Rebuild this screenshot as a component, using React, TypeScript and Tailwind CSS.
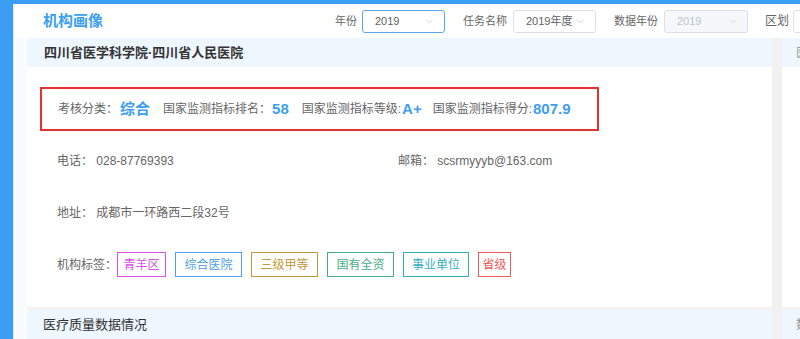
import { ChevronDown } from "lucide-react";

const FONT = { fontFamily: '"Liberation Sans", "Noto Sans CJK SC", sans-serif' };

const TAGS = [
  { t: "青羊区", c: "#d94fe6", w: 49 },
  { t: "综合医院", c: "#4f9fe3", w: 67 },
  { t: "三级甲等", c: "#c09a3c", w: 67 },
  { t: "国有全资", c: "#45ae7f", w: 67 },
  { t: "事业单位", c: "#35aebf", w: 66 },
  { t: "省级", c: "#ef5a5a", w: 33 },
];

function Select({ value, focus, disabled, w = 83 }: { value: string; focus?: boolean; disabled?: boolean; w?: number }) {
  const border = focus ? "border-[#5aa6f0]" : "border-[#dcdfe6]";
  return (
    <div
      className={`h-[23px] flex items-center justify-between pl-[12px] pr-[9px] rounded-[3px] border shrink-0 text-[11px] ${border} ${
        disabled ? "bg-[#f5f7fa] text-[#c0c4cc]" : "bg-white text-[#606266]"
      }`}
      style={{ width: w }}
    >
      <span>{value}</span>
      <ChevronDown size={11} strokeWidth={1.5} color="#c0c4cc" />
    </div>
  );
}

export default function App() {
  return (
    <div className="w-[800px] h-[339px] overflow-hidden flex bg-[#3a9ff2]" style={FONT}>
      <div className="w-[13px] shrink-0" />
      <div className="flex-1 mt-[4px] bg-[#f9fbfd] border-l border-[#dce6f0] flex flex-col min-w-0">
        {/* header */}
        <div className="h-[34px] bg-white flex items-center pl-[29px] shrink-0">
          <span className="text-[15px] font-bold text-[#3d9ff0] w-[60px] shrink-0">机构画像</span>
          <div className="ml-[232px] flex items-center text-[11px] text-[#666] whitespace-nowrap">
            <span className="mr-[5px]">年份</span>
            <Select value="2019" focus />
            <span className="ml-[18px] mr-[6px]">任务名称</span>
            <Select value="2019年度" />
            <span className="ml-[18px] mr-[6px]">数据年份</span>
            <Select value="2019" disabled w={84} />
            <span className="ml-[17px] mr-[4px] text-[12px]">区划</span>
            <Select value="" w={80} />
          </div>
        </div>

        <div className="flex pl-[13px] flex-1">
          {/* main column */}
          <div className="w-[745px] shrink-0 flex flex-col gap-[3px] bg-[#f5f3f1]">
            <div>
              <div className="h-[29px] bg-[#eef6fe] flex items-center pl-[17px] text-[13px] font-bold text-[#333]">
                四川省医学科学院·四川省人民医院
              </div>
              <div className="bg-white h-[240px] pt-[20px] pl-[13px] text-[12px] text-[#666]">
                <div className="w-[559px] h-[44px] border-2 border-[#e5322f] flex items-center pl-[16px] whitespace-nowrap">
                  <span>考核分类：</span>
                  <span className="text-[15px] font-bold text-[#3d9ef0] ml-[2px]">综合</span>
                  <span className="ml-[13px]">国家监测指标排名：</span>
                  <span className="text-[15px] font-bold text-[#3d9ef0] ml-[1px]">58</span>
                  <span className="ml-[13px]">国家监测指标等级:</span>
                  <span className="text-[15px] font-bold text-[#3d9ef0] ml-[1px]">A+</span>
                  <span className="ml-[11px]">国家监测指标得分:</span>
                  <span className="text-[15px] font-bold text-[#3d9ef0] ml-[1px]">807.9</span>
                </div>
                <div className="pl-[17px]">
                  <div className="mt-[21px] flex leading-[18px]">
                    <span className="w-[341px]">电话： 028-87769393</span>
                    <span>邮箱： scsrmyyyb@163.com</span>
                  </div>
                  <div className="mt-[34px] leading-[18px]">地址： 成都市一环路西二段32号</div>
                  <div className="mt-[30px] flex items-center">
                    <span className="w-[60px] whitespace-nowrap">机构标签：</span>
                    <div className="flex gap-[9px]">
                      {TAGS.map((g) => (
                        <span
                          key={g.t}
                          className="h-[25px] border flex items-center justify-center whitespace-nowrap"
                          style={{ borderColor: g.c, color: g.c, width: g.w }}
                        >
                          {g.t}
                        </span>
                      ))}
                    </div>
                  </div>
                </div>
              </div>
            </div>
            <div className="h-[29px] bg-[#eef6fe] flex items-center pl-[16px] text-[13px] text-[#333]">
              医疗质量数据情况
            </div>
          </div>

          <div className="w-[10px] shrink-0 bg-[#f1f1f1]" />

          {/* right column (cut off) */}
          <div className="flex-1 flex flex-col gap-[3px] bg-[#f5f3f1] min-w-0">
            <div>
              <div className="h-[29px] bg-[#eef6fe] flex items-center pl-[14px] text-[12px] text-[#999] whitespace-nowrap">
                医疗
              </div>
              <div className="bg-white h-[240px]" />
            </div>
            <div className="h-[29px] bg-[#eef6fe] flex items-center pl-[14px] text-[12px] text-[#999] whitespace-nowrap">
              数据
            </div>
          </div>
        </div>
      </div>
    </div>
  );
}
